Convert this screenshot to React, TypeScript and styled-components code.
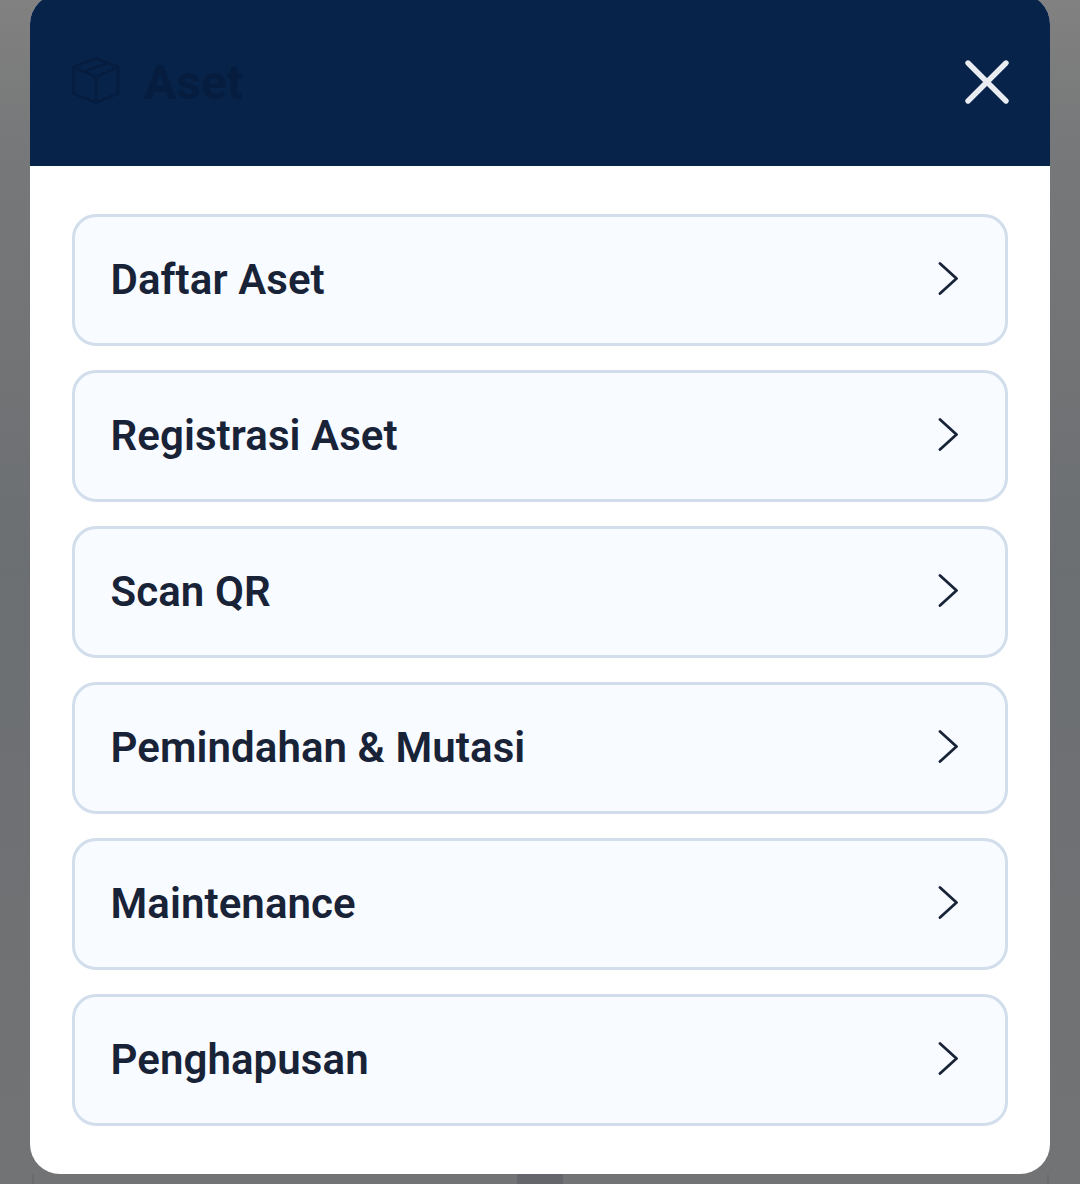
import React from "react";
import styled, { createGlobalStyle } from "styled-components";

const Global = createGlobalStyle`
  html, body { margin: 0; padding: 0; height: 1184px; overflow: hidden; }
  * { box-sizing: border-box; }
`;

const Backdrop = styled.div`
  width: 1080px;
  height: 1184px;
  overflow: hidden;
  padding: 0 30px;
  background:
    linear-gradient(#65666b, #65666b) 517px 1174px / 46px 10px no-repeat,
    linear-gradient(#6b6c70, #6b6c70) 32px 1174px / 2px 10px no-repeat,
    linear-gradient(#6b6c70, #6b6c70) 1047px 1174px / 2px 10px no-repeat,
    linear-gradient(180deg, #818181 0%, #777879 12%, #6c6f72 48%, #727375 100%);
  font-family: Roboto, "Liberation Sans", sans-serif;
`;

const Modal = styled.div`
  width: 1020.5px;
  height: 1180px;
  margin: -6px 0 0 -0.5px;
  border-radius: 30px;
  overflow: hidden;
  background: #ffffff;
`;

const Header = styled.header`
  height: 172px;
  padding: 6px 39px 2px 42.5px;
  background: #072349;
  display: flex;
  align-items: center;
  justify-content: space-between;
`;

const TitleGroup = styled.div`
  display: flex;
  align-items: center;
  gap: 24px;
  color: #061d40;
`;

const Title = styled.h1`
  margin: 1px 0 0;
  font-size: 48px;
  font-weight: 700;
  line-height: 56px;
`;

const CloseButton = styled.button`
  width: 48px;
  height: 48px;
  padding: 0;
  border: 0;
  background: none;
  color: #e9edf2;
  display: flex;
  align-items: center;
  justify-content: center;
`;

const MenuList = styled.nav`
  display: flex;
  flex-direction: column;
  gap: 24px;
  padding: 48px 42px 48px 42.5px;
`;

const MenuCard = styled.div`
  height: 132px;
  padding: 0 42px 0 35.5px;
  display: flex;
  align-items: center;
  justify-content: space-between;
  background: #f8fbff;
  border: 3px solid #d2deec;
  border-radius: 24px;
  color: #192338;
`;

const MenuLabel = styled.span`
  font-size: 42px;
  font-weight: 600;
  line-height: 50px;
  letter-spacing: 0.08px;
`;

const Chevron = styled.svg`
  width: 36px;
  height: 36px;
  display: block;
`;

const items = ["Daftar Aset", "Registrasi Aset", "Scan QR", "Pemindahan & Mutasi", "Maintenance", "Penghapusan"];

export default function App() {
  return (
    <Backdrop>
      <Global />
      <Modal>
        <Header>
          <TitleGroup>
            <svg width="48" height="50" viewBox="0 0 48 50" fill="none" stroke="currentColor" strokeWidth="2.8" strokeLinecap="round" strokeLinejoin="round">
              <path d="M24 1.5 46 10v26.5L24 45.5 1.5 36.5V10z" />
              <path d="M1.5 10 24 20 46 10" />
              <path d="M24 20v25.5" />
              <path d="M12 15 35 6" />
            </svg>
            <Title>Aset</Title>
          </TitleGroup>
          <CloseButton aria-label="Tutup">
            <svg width="48" height="48" viewBox="0 0 48 48" fill="none" stroke="currentColor" strokeWidth="5.4" strokeLinecap="round">
              <path d="M5 5 43 43M43 5 5 43" />
            </svg>
          </CloseButton>
        </Header>
        <MenuList>
          {items.map((label) => (
            <MenuCard key={label}>
              <MenuLabel>{label}</MenuLabel>
              <Chevron viewBox="0 0 36 36" fill="none" stroke="currentColor" strokeWidth="2.8" strokeLinecap="round" strokeLinejoin="round">
                <path d="M13 1.5 29.5 16.5 13 31.5" />
              </Chevron>
            </MenuCard>
          ))}
        </MenuList>
      </Modal>
    </Backdrop>
  );
}
